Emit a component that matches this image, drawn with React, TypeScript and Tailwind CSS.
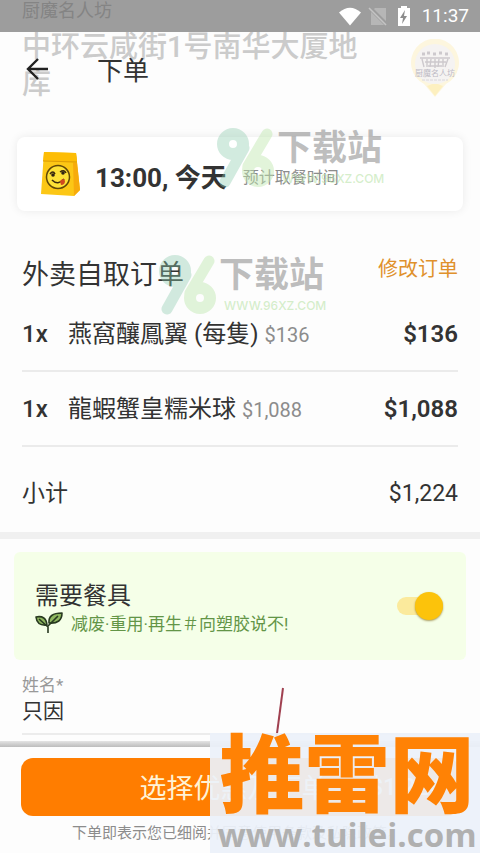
import React from "react";

const items = [
  { qty: "1x", name: "燕窩釀鳳翼 (每隻)", unit: "$136", total: "$136" },
  { qty: "1x", name: "龍蝦蟹皇糯米球", unit: "$1,088", total: "$1,088" },
];

function StatusBar() {
  return (
    <div className="relative z-10 flex h-8 items-center justify-end overflow-hidden bg-[#9d9d9d] pr-[11px] text-white">
      <span className="absolute top-0 left-[22px] text-[18px] leading-[22px] text-[#848484]">厨魔名人坊</span>
      <svg className="mr-1 h-6 w-6" viewBox="0 0 24 24" fill="currentColor" aria-hidden="true">
        <path d="M12 21.5 1 8.5Q12-1 23 8.5Z" />
      </svg>
      <svg className="mr-1 h-6 w-6" viewBox="0 0 24 24" aria-hidden="true">
        <path d="M9 4h11v17H5V8Z" fill="#b6b6b6" />
        <path d="M4 4 21 21" stroke="#9d9d9d" strokeWidth="4" />
        <path d="M3 4 20 21" stroke="#c4c4c4" strokeWidth="1.6" />
      </svg>
      <svg className="mr-2 h-6 w-5" viewBox="0 0 20 24" aria-hidden="true">
        <path d="M7 2h6v2h3v18H4V4h3Z" fill="currentColor" />
        <path d="M11 6 6 14h3l-1 6 5-8h-3Z" fill="#8c8c8c" />
      </svg>
      <span className="text-[19px] leading-[34px]">11:37</span>
    </div>
  );
}

function ShopPin() {
  return (
    <svg className="h-[60px] w-[50px]" viewBox="0 0 50 60" aria-hidden="true">
      <path d="M25 58 14 45A24 24 0 1 1 36 45Z" fill="#fdf6de" />
      <path d="M25 57 17 47 25 44 33 47Z" fill="#fdf0c0" />
      <circle cx="25" cy="25" r="20" fill="#f5f3f2" />
      <g fill="none" stroke="#cdc9cd" strokeWidth="1.4">
        <path d="M12 15h3m2-1h3m3 1h3m3-1h3m3 1h3" strokeWidth="3" />
        <path d="M10 19h30M12 20l2 8m3-8v8m4-8-1 8m5-8v9m4-9-1 8m5-8v8m5-8-3 8M15 23h21M18 27h14" />
      </g>
      <text x="25" y="37" textAnchor="middle" fontSize="8" fill="#bdbac4">厨魔名人坊</text>
      <path d="M12 41h26" stroke="#d9d6da" strokeDasharray="3 1" />
    </svg>
  );
}

function PaperBag() {
  return (
    <svg className="h-[46px] w-[42px] shrink-0" viewBox="0 0 42 46" aria-hidden="true">
      <path d="M4 1 36 2 40 39 34 45 1 43Z" fill="#fcc716" />
      <path d="M36 2 40 39 34 45 33 11Z" fill="#f7ab0c" />
      <path d="M4 1 36 2 37 12 3 10Z" fill="#fdbd05" />
      <path d="M3 10 37 11" stroke="#db9d08" strokeWidth="1" />
      <circle cx="18" cy="26" r="11.500" fill="#fde136" stroke="#604707" strokeWidth="1.500" />
      <path d="M10 23q3-4 5 0M20 21q4-3 6 1" fill="none" stroke="#3b2a0c" strokeWidth="1.500" />
      <circle cx="13" cy="24" r="1.800" fill="#2e2312" />
      <circle cx="23" cy="22" r="1.800" fill="#2e2312" />
      <path d="M12 29q6 6 12-1" fill="none" stroke="#3b2a0c" strokeWidth="1.600" />
      <path d="M20 30q4-4 5 0 0 4-4 4Z" fill="#d1491f" />
    </svg>
  );
}

function Sprout() {
  return (
    <svg className="h-6 w-7 shrink-0" viewBox="0 0 28 24" fill="#8fb860" stroke="#283a20" strokeWidth="1.600" strokeLinejoin="round" aria-hidden="true">
      <path d="M12 13Q2 14 1 5 11 3 12 13Z" />
      <path d="M14 11Q13 1 27 1 27 12 14 11Z" />
      <path d="M4 7 13 15 13 21M23 4 13 14" fill="none" />
    </svg>
  );
}

function SiteMark({ className }: { className: string }) {
  return (
    <div className={"pointer-events-none absolute flex items-start " + className} aria-hidden="true">
      <svg className="h-[60px] w-[60px]" viewBox="0 0 60 60" fill="none">
        <g opacity="0.38" stroke="#8ccbad">
          <circle cx="16" cy="16" r="10" strokeWidth="12" />
          <path d="M27 20 8 54" strokeWidth="11" strokeLinecap="round" />
        </g>
        <g opacity="0.45" stroke="#bfe8ae">
          <circle cx="41" cy="43" r="10" strokeWidth="12" />
          <path d="M31 38 50 6" strokeWidth="11" strokeLinecap="round" />
        </g>
      </svg>
      <div>
        <div className="text-[35px] leading-[42px] font-bold text-[#7d7d7d]/50">下载站</div>
        <div className="pl-[5px] font-[Inter] text-[12px] leading-[18px] font-medium text-[#b9e3a8]/60">WWW.96XZ.COM</div>
      </div>
    </div>
  );
}

export default function App() {
  return (
    <div className="relative flex min-h-screen flex-col overflow-hidden bg-[#fdfdfd] font-[Roboto,'Noto_Sans_CJK_SC',sans-serif] text-[#333]">
      <StatusBar />
      <header className="relative flex h-[74px] items-center pr-5 pl-[25px]">
        <p className="absolute top-[-3px] right-[110px] left-[22px] text-[29px] leading-[37px] font-medium text-[#cbcbcb]">
          中环云咸街1号南华大厦地库
        </p>
        <button type="button" aria-label="返回" className="relative">
          <svg className="h-6 w-6" viewBox="0 0 24 24" fill="none" stroke="#222" strokeWidth="2.400" aria-hidden="true">
            <path d="M23 12H3M13 2 3 12 13 22" />
          </svg>
        </button>
        <h1 className="relative ml-12 flex-1 pt-1 text-[26px]">下单</h1>
        <ShopPin />
      </header>

      <section className="relative mx-[17px] mt-[31px] flex h-[74px] items-center rounded-lg bg-white pl-[23px] shadow-[0_0_10px_rgba(0,0,0,0.08)]">
        <PaperBag />
        <strong className="ml-[13px] pt-2 text-[26px] font-bold whitespace-nowrap">13:00, 今天</strong>
        <span className="ml-4 pt-2 text-[16px] whitespace-nowrap text-[#8c8c8c]">预计取餐时间</span>
        <SiteMark className="top-[-9px] left-[200px]" />
      </section>

      <section className="relative px-[22px] pt-[42px]">
        <div className="flex h-11 items-center justify-between">
          <h2 className="text-[27px]">外卖自取订单</h2>
          <a href="#edit" className="pb-3 text-[20px] text-[#e0912c]">修改订单</a>
        </div>
        <ul>
          {items.map((item) => (
            <li key={item.name} className="flex h-[75px] items-center border-b-2 border-[#ebebeb] text-[24px]">
              <span className="w-[46px] font-medium">{item.qty}</span>
              <span className="flex-1">
                {item.name} <span className="text-[20px] text-[#8c8c8c]">{item.unit}</span>
              </span>
              <span className="font-semibold">{item.total}</span>
            </li>
          ))}
        </ul>
        <div className="flex h-[85px] items-center justify-between pt-2.5 text-[23px]">
          <span>小计</span>
          <span>$1,224</span>
        </div>
        <SiteMark className="top-[44px] left-[159px]" />
      </section>

      <div className="h-[7px] bg-[#f0f0f0]" />

      <section className="mx-[14px] mt-[13px] flex h-[108px] items-center justify-between rounded-md bg-[#f5ffe8] pr-[23px] pl-[21px]">
        <div className="pt-1">
          <label htmlFor="cutlery" className="block text-[24px] leading-8">需要餐具</label>
          <p className="flex items-center gap-2 text-[17px] leading-6 whitespace-nowrap text-[#639547]">
            <Sprout />
            减废·重用·再生＃向塑胶说不!
          </p>
        </div>
        <input
          id="cutlery"
          type="checkbox"
          role="switch"
          defaultChecked
          className="relative h-[18px] w-[46px] appearance-none rounded-full bg-[#fbea9c] before:absolute before:-top-[5px] before:right-0 before:h-7 before:w-7 before:rounded-full before:bg-[#fcc30b] before:shadow-[0_1px_2px_rgba(120,90,0,0.6)]"
        />
      </section>

      <section className="relative mx-[22px] mt-[13px] border-b-2 border-[#ececec] pb-1.5">
        <label htmlFor="name" className="block text-[17px] leading-[24px] text-[#999]">姓名*</label>
        <input id="name" defaultValue="只因" className="block h-[30px] w-full bg-transparent text-[21px] outline-none" />
        <svg className="pointer-events-none absolute top-[14px] left-[252px] h-[54px] w-3" viewBox="0 0 12 54" aria-hidden="true">
          <path d="M9 1 2 54" stroke="#a04050" strokeWidth="2" />
        </svg>
      </section>

      <footer className="relative mt-[6px] flex-1 px-[21px]">
        <div className="-mx-[21px] h-[6px] bg-linear-to-b from-[#e4e4e4] to-[#bcbcbc]" />
        <button type="button" className="relative mt-[11px] flex h-[58px] w-full items-center justify-center rounded-xl bg-[#ff7d00] text-[27px] text-[#fff3d6]">
          <span className="pt-1 pr-3">选择优惠及下单</span>
          <span className="absolute right-4 text-[24px] font-medium">$1,224</span>
        </button>
        <p className="mt-[6px] pr-[6px] text-center text-[15px] leading-[22px] whitespace-nowrap text-[#8c8c8c]">下单即表示您已细阅并同意使用条款及私隐政策。</p>
        <div className="pointer-events-none absolute -top-[8px] right-0 bottom-0 flex w-[270px] flex-col items-center bg-[#ecf1fa]/93 pl-[4px]">
          <span className="text-[85px] leading-[88px] font-black whitespace-nowrap text-[#ff8205]">推雷网</span>
          <span className="font-['Open_Sans'] text-[33px] leading-[28px] font-bold text-[#b0b0b0]">www.tuilei.com</span>
        </div>
      </footer>
    </div>
  );
}
